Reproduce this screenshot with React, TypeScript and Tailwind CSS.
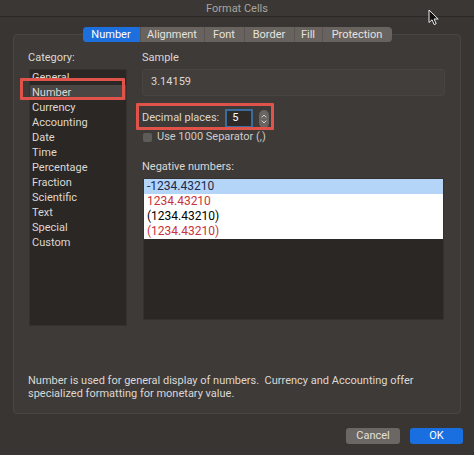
import React from "react";

const font = { fontFamily: 'Roboto, "Liberation Sans", "Noto Sans", sans-serif' };

const tabs = [
  { label: "Number", w: "w-[57px]", active: true },
  { label: "Alignment", w: "w-[64px]" },
  { label: "Font", w: "w-[40px]" },
  { label: "Border", w: "w-[50px]" },
  { label: "Fill", w: "w-[28px]" },
  { label: "Protection", w: "w-[70px]" },
];

const categories = [
  "General",
  "Number",
  "Currency",
  "Accounting",
  "Date",
  "Time",
  "Percentage",
  "Fraction",
  "Scientific",
  "Text",
  "Special",
  "Custom",
];

export default function App() {
  return (
    <div
      className="relative w-[474px] h-[455px] bg-[#393532] text-[11px] text-[#dcd8d4] flex flex-col overflow-hidden"
      style={font}
    >
      {/* Title bar */}
      <div className="h-[17px] flex items-center justify-center bg-[#3b3734] border-b border-[#2b2725] text-[#a9a49f] text-[11px] leading-none">
        Format Cells
      </div>

      {/* cursor */}
      <svg className="absolute left-[428px] top-[9px]" width="12" height="17" viewBox="0 0 12 17">
        <path d="M1 1 L1 13.5 L4 10.8 L6.2 15.6 L8.2 14.7 L6.1 10 L10.2 10 Z" fill="#111" stroke="#eee" strokeWidth="1" strokeLinejoin="round" />
      </svg>

      {/* Tabs */}
      <div className="relative z-10 mt-[10px] flex justify-center">
        <div className="flex h-[15px] rounded-[4px] bg-[#68635f] overflow-hidden">
          {tabs.map((t, i) => (
            <div
              key={t.label}
              className={`${t.w} flex items-center justify-center leading-none text-[11px] ${
                t.active ? "bg-[#1d6fdd] text-white" : "text-[#e6e2de]"
              } ${i > 0 && !t.active ? "border-l border-[#5a5552]" : ""}`}
            >
              {t.label}
            </div>
          ))}
        </div>
      </div>

      {/* Group box */}
      <div className="-mt-[8px] mx-[13px] h-[380px] rounded-[4px] border border-[#4a4643] bg-[#3e3a37] flex flex-col pt-[16px] pl-[14px] pb-[13px]">
        <div className="flex">
          {/* Left column */}
          <div className="w-[99px] flex flex-col">
            <div className="h-[14px] leading-[14px]">Category:</div>
            <div className="ml-[1px] mt-[4px] h-[257px] bg-[#2b2724] border border-[#35312e] overflow-hidden">
              <div className="flex flex-col">
                {categories.map((c) => (
                  <div
                    key={c}
                    className={`h-[15px] leading-[15px] pl-[2px] ${c === "Number" ? "bg-[#4a4643]" : ""}`}
                  >
                    {c}
                  </div>
                ))}
              </div>
            </div>
          </div>

          {/* Right column */}
          <div className="ml-[15px] w-[303px] flex flex-col">
            <div className="h-[14px] leading-[14px]">Sample</div>
            <div className="mt-[4px] h-[27px] rounded-[3px] bg-[#423e3b] border border-[#48443f] flex items-center pl-[8px]">
              3.14159
            </div>

            <div className="mt-[13px] h-[19px] flex items-center">
              <span>Decimal places:</span>
              <div className="ml-[6px] w-[28px] h-[19px] border-2 border-[#3b6ca0] bg-[#2e2a28] flex items-center pl-[5px] text-white">
                5
              </div>
              <div className="ml-[6px] w-[10px] h-[18px] rounded-[5px] bg-[#6a6562] flex flex-col items-center justify-center gap-[2px]">
                <svg width="6" height="4" viewBox="0 0 6 4">
                  <path d="M0.8 3.4 L3 1 L5.2 3.4" fill="none" stroke="#d8d4d0" strokeWidth="1" />
                </svg>
                <svg width="6" height="4" viewBox="0 0 6 4">
                  <path d="M0.8 0.6 L3 3 L5.2 0.6" fill="none" stroke="#d8d4d0" strokeWidth="1" />
                </svg>
              </div>
            </div>

            <div className="mt-[3px] h-[12px] flex items-center">
              <div className="ml-[1px] w-[9px] h-[9px] rounded-[2px] bg-[#5f5b58]" />
              <span className="ml-[5px] text-[#cfcbc7]">Use 1000 Separator (,)</span>
            </div>

            <div className="mt-[17px] h-[14px] leading-[14px]">Negative numbers:</div>
            <div className="mt-[4px] ml-[1px] w-[301px] h-[142px] bg-[#2b2724] border border-[#35312e] flex flex-col text-[12px]">
              <div className="h-[15px] leading-[15px] pl-[3px] bg-[#b4d5f8] text-[#1a2b4c]">-1234.43210</div>
              <div className="h-[15px] leading-[15px] pl-[3px] bg-white text-[#c9323b]">1234.43210</div>
              <div className="h-[15px] leading-[15px] pl-[3px] bg-white text-black">(1234.43210)</div>
              <div className="h-[15px] leading-[15px] pl-[3px] bg-white text-[#c9323b]">(1234.43210)</div>
            </div>
          </div>
        </div>

        <div className="mt-auto leading-[13px] pr-[20px]">
          Number is used for general display of numbers.&nbsp; Currency and Accounting offer specialized formatting for monetary value.
        </div>
      </div>

      {/* Buttons */}
      <div className="mt-[14px] mr-[11px] flex justify-end gap-[10px]">
        <div className="w-[54px] h-[16px] rounded-[3px] bg-[#6b6764] text-[#e4e0dc] flex items-center justify-center">
          Cancel
        </div>
        <div className="w-[53px] h-[16px] rounded-[3px] bg-[#1a6fe0] text-white flex items-center justify-center">
          OK
        </div>
      </div>

      {/* Annotation boxes */}
      <div className="absolute left-[20px] top-[78px] w-[105px] h-[22px] border-[3px] border-[#e0534b] rounded-[1px]" />
      <div className="absolute left-[136px] top-[103px] w-[138px] h-[27px] border-[3px] border-[#e0534b] rounded-[1px]" />
    </div>
  );
}
